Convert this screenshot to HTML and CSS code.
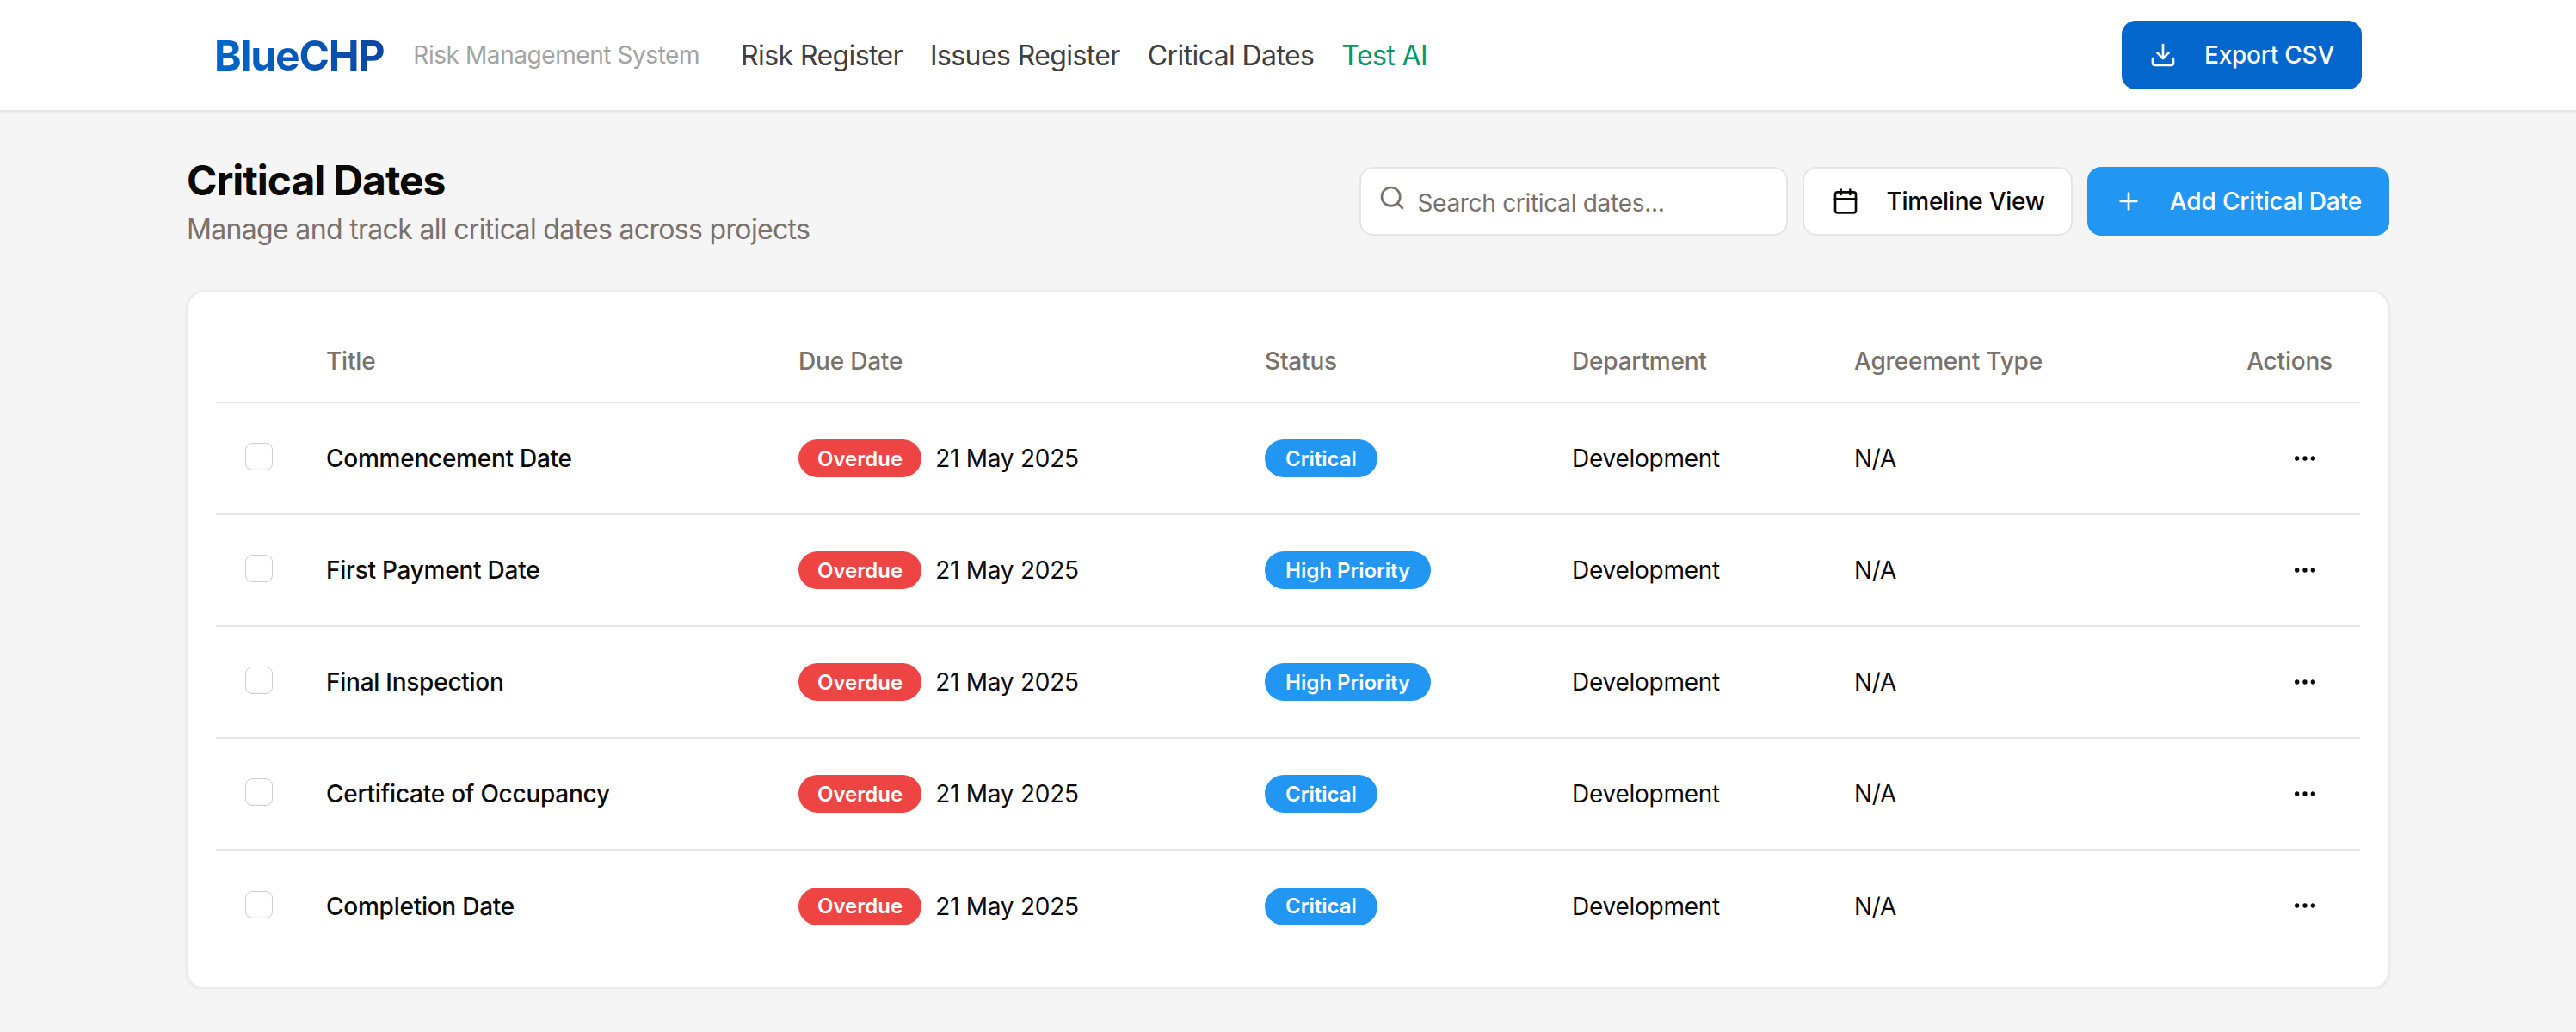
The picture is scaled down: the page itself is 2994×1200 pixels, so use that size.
FILE: index.html
```html
<!DOCTYPE html>
<html lang="en">
  <head>
    <meta charset="UTF-8" />
    <meta name="viewport" content="width=device-width, initial-scale=1.0" />
    <title>Critical Dates</title>
    <link rel="stylesheet" href="styles.css">
  </head>
  <body>
    <header class="topbar">
      <div class="topbar-inner">
        <div class="brand">
          <span class="logo">BlueCHP</span>
          <span class="tagline">Risk Management System</span>
        </div>
        <nav class="nav">
          <a href="#">Risk Register</a>
          <a href="#">Issues Register</a>
          <a href="#">Critical Dates</a>
          <a href="#" class="nav-ai">Test AI</a>
        </nav>
        <button class="btn btn-export">
          <svg class="icon" viewBox="0 0 24 24"><path d="M21 15v4a2 2 0 0 1-2 2H5a2 2 0 0 1-2-2v-4" /><path d="M7 10l5 5 5-5" /><path d="M12 15V3" /></svg>
          Export CSV
        </button>
      </div>
    </header>

    <main class="page">
      <div class="page-head">
        <div>
          <h1>Critical Dates</h1>
          <p class="subtitle">Manage and track all critical dates across projects</p>
        </div>
        <div class="tools">
          <label class="search">
            <svg class="icon" viewBox="0 0 24 24"><circle cx="11" cy="11" r="8" /><path d="M21 21l-4.3-4.3" /></svg>
            <input type="text" placeholder="Search critical dates..." />
          </label>
          <button class="btn btn-light">
            <svg class="icon" viewBox="0 0 24 24"><path d="M8 2v4" /><path d="M16 2v4" /><rect x="3" y="4" width="18" height="18" rx="2" /><path d="M3 10h18" /></svg>
            Timeline View
          </button>
          <button class="btn btn-add">
            <svg class="icon" viewBox="0 0 24 24"><path d="M5 12h14" /><path d="M12 5v14" /></svg>
            Add Critical Date
          </button>
        </div>
      </div>

      <section class="card">
        <table class="dates">
          <colgroup>
            <col class="col-check" />
            <col class="col-title" />
            <col class="col-due" />
            <col class="col-status" />
            <col class="col-dept" />
            <col class="col-type" />
            <col class="col-actions" />
          </colgroup>
          <thead>
            <tr>
              <th></th>
              <th>Title</th>
              <th>Due Date</th>
              <th>Status</th>
              <th>Department</th>
              <th>Agreement Type</th>
              <th class="right">Actions</th>
            </tr>
          </thead>
          <tbody>
            <tr>
              <td><input type="checkbox" class="check" /></td>
              <td class="name">Commencement Date</td>
              <td><span class="due"><span class="badge badge-red">Overdue</span>21 May 2025</span></td>
              <td><span class="badge badge-blue">Critical</span></td>
              <td>Development</td>
              <td>N/A</td>
              <td class="right"><button class="more"><svg class="icon" viewBox="0 0 24 24"><circle cx="12" cy="12" r="1" /><circle cx="19" cy="12" r="1" /><circle cx="5" cy="12" r="1" /></svg></button></td>
            </tr>
            <tr>
              <td><input type="checkbox" class="check" /></td>
              <td class="name">First Payment Date</td>
              <td><span class="due"><span class="badge badge-red">Overdue</span>21 May 2025</span></td>
              <td><span class="badge badge-blue">High Priority</span></td>
              <td>Development</td>
              <td>N/A</td>
              <td class="right"><button class="more"><svg class="icon" viewBox="0 0 24 24"><circle cx="12" cy="12" r="1" /><circle cx="19" cy="12" r="1" /><circle cx="5" cy="12" r="1" /></svg></button></td>
            </tr>
            <tr>
              <td><input type="checkbox" class="check" /></td>
              <td class="name">Final Inspection</td>
              <td><span class="due"><span class="badge badge-red">Overdue</span>21 May 2025</span></td>
              <td><span class="badge badge-blue">High Priority</span></td>
              <td>Development</td>
              <td>N/A</td>
              <td class="right"><button class="more"><svg class="icon" viewBox="0 0 24 24"><circle cx="12" cy="12" r="1" /><circle cx="19" cy="12" r="1" /><circle cx="5" cy="12" r="1" /></svg></button></td>
            </tr>
            <tr>
              <td><input type="checkbox" class="check" /></td>
              <td class="name">Certificate of Occupancy</td>
              <td><span class="due"><span class="badge badge-red">Overdue</span>21 May 2025</span></td>
              <td><span class="badge badge-blue">Critical</span></td>
              <td>Development</td>
              <td>N/A</td>
              <td class="right"><button class="more"><svg class="icon" viewBox="0 0 24 24"><circle cx="12" cy="12" r="1" /><circle cx="19" cy="12" r="1" /><circle cx="5" cy="12" r="1" /></svg></button></td>
            </tr>
            <tr>
              <td><input type="checkbox" class="check" /></td>
              <td class="name">Completion Date</td>
              <td><span class="due"><span class="badge badge-red">Overdue</span>21 May 2025</span></td>
              <td><span class="badge badge-blue">Critical</span></td>
              <td>Development</td>
              <td>N/A</td>
              <td class="right"><button class="more"><svg class="icon" viewBox="0 0 24 24"><circle cx="12" cy="12" r="1" /><circle cx="19" cy="12" r="1" /><circle cx="5" cy="12" r="1" /></svg></button></td>
            </tr>
          </tbody>
        </table>
      </section>
    </main>
  </body>
</html>
```

FILE: styles.css
```css
* {
  box-sizing: border-box;
}
body {
  margin: 0;
  font-family: Inter, "Liberation Sans", sans-serif;
  background-color: #f5f5f5;
  color: #0c0a09;
}
.icon {
  width: 32px;
  height: 32px;
  flex: none;
  fill: none;
  stroke: currentColor;
  stroke-width: 2;
  stroke-linecap: round;
  stroke-linejoin: round;
}

.topbar {
  height: 128px;
  background-color: #fff;
  box-shadow: 0 2px 4px rgba(0, 0, 0, 0.08);
}
.topbar-inner {
  width: 2560px;
  height: 100%;
  margin: 0 auto;
  padding: 0 32px;
  display: flex;
  align-items: center;
}
.brand {
  display: flex;
  align-items: center;
  gap: 34px;
}
.logo {
  font-size: 48px;
  font-weight: 700;
  letter-spacing: -1.2px;
  background: linear-gradient(90deg, #0066cc, #0d47a1);
  background-clip: text;
  -webkit-background-clip: text;
  color: transparent;
}
.tagline {
  font-size: 28px;
  letter-spacing: -0.43px;
  color: #a3a3a3;
}
.nav {
  display: flex;
  gap: 32px;
  margin-left: 48px;
}
.nav a {
  font-size: 32px;
  letter-spacing: -0.6px;
  color: #404040;
  text-decoration: none;
}
.nav .nav-ai {
  color: #059669;
}

.btn {
  height: 80px;
  padding: 0 32px;
  display: flex;
  align-items: center;
  gap: 32px;
  border: none;
  border-radius: 16px;
  font-family: inherit;
  font-size: 28px;
  font-weight: 500;
  letter-spacing: -0.25px;
  cursor: pointer;
}
.btn-export {
  margin-left: auto;
  background-color: #0366cc;
  color: #fff;
}
.btn-light {
  padding: 0 30px 0 32px;
  gap: 31px;
  background-color: #fff;
  border: 2px solid #e5e5e5;
  color: #0c0a09;
}
.btn-add {
  background-color: #2196f3;
  color: #fff;
  letter-spacing: -0.15px;
}

.page {
  width: 2560px;
  margin: 0 auto;
}
.page-head {
  padding-top: 54px;
  display: flex;
  justify-content: space-between;
  align-items: flex-start;
}
h1 {
  margin: 0;
  font-size: 48px;
  line-height: 56px;
  font-weight: 700;
  letter-spacing: -1.05px;
}
.subtitle {
  margin: 9px 0 0;
  font-size: 32px;
  line-height: 40px;
  letter-spacing: -0.67px;
  color: #78716c;
}
.tools {
  display: flex;
  gap: 17px;
  margin-top: 12px;
}
.search {
  width: 498px;
  height: 80px;
  padding: 18px 20px 0;
  display: flex;
  align-items: flex-start;
  gap: 13px;
  background-color: #fff;
  border: 2px solid #e5e5e5;
  border-radius: 16px;
  color: #78716c;
}
.search input {
  flex: 1;
  min-width: 0;
  height: 36px;
  margin-top: 4px;
  padding: 0;
  border: none;
  outline: none;
  background: none;
  font-family: inherit;
  font-size: 28px;
  letter-spacing: -0.3px;
}
.search input::placeholder {
  color: #78716c;
  opacity: 1;
}

.card {
  margin-top: 51px;
  padding: 32px 32px 30px;
  background-color: #fff;
  border: 2px solid #ebebeb;
  border-radius: 20px;
  box-shadow: 0 1px 4px rgba(0, 0, 0, 0.08);
}
.dates {
  width: 100%;
  table-layout: fixed;
  border-collapse: collapse;
  font-size: 28px;
  letter-spacing: -0.25px;
}
.col-check { width: 96px; }
.col-title { width: 549px; }
.col-due { width: 542px; }
.col-status { width: 357px; }
.col-dept { width: 328px; }
.col-type { width: 400px; }

th {
  height: 96px;
  padding: 0 32px;
  text-align: left;
  font-weight: 500;
  letter-spacing: -0.2px;
  color: #78716c;
  border-bottom: 2px solid #e5e5e5;
}
td {
  height: 130px;
  padding: 0 32px;
  border-bottom: 2px solid #e5e5e5;
}
tbody tr:last-child td {
  border-bottom: none;
}
.right {
  text-align: right;
}
.name {
  font-weight: 500;
}
.due {
  display: flex;
  align-items: center;
  gap: 16px;
}
.badge {
  height: 44px;
  padding: 0 24px;
  display: inline-flex;
  align-items: center;
  border-radius: 22px;
  color: #fff;
  font-size: 24px;
  font-weight: 600;
  letter-spacing: 0;
}
.badge-red {
  padding: 0 22px;
  background-color: #ef4444;
}
.badge-blue {
  background-color: #2196f3;
}
.check {
  appearance: none;
  display: block;
  width: 32px;
  height: 32px;
  margin: -4px 0 0 2px;
  background-color: #fff;
  border: 1px solid #cfcfcf;
  border-radius: 8px;
  box-shadow: inset 0 -1px 1px rgba(0, 0, 0, 0.04);
}
.more {
  display: block;
  margin: 2px 16px 0 auto;
  padding: 0;
  border: none;
  background: none;
  color: #0c0a09;
}
```
